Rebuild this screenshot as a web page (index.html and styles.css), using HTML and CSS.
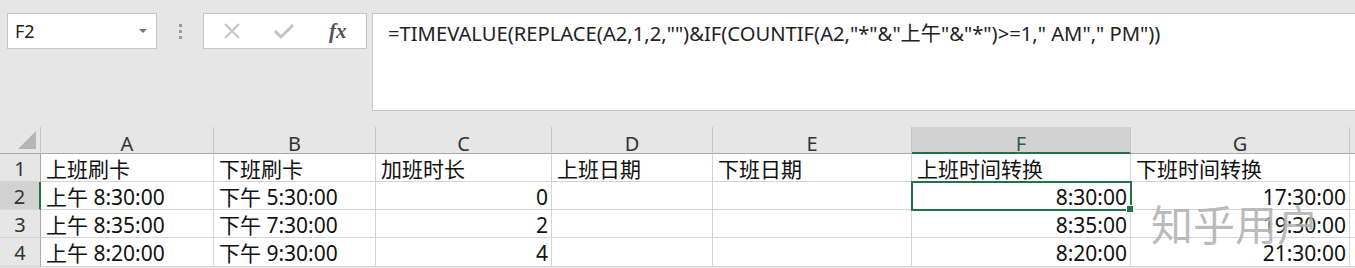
FILE: index.html
```html
<!DOCTYPE html>
<html lang="zh-CN">
<head>
  <meta charset="UTF-8" />
  <meta name="viewport" content="width=device-width, initial-scale=1.0"/>
  <title>TIMEVALUE 时间转换</title>
  <link rel="stylesheet" href="styles.css">
</head>
<body>

  <div class="toolbar">
    <div class="namebox">
      <span>F2</span>
      <span class="arrow"></span>
    </div>
    <div class="dots"><i></i><i></i><i></i></div>
    <div class="fxbox">
      <svg class="ico" width="20" height="20" viewBox="0 0 20 20">
        <path d="M3 3 L17 17 M17 3 L3 17" stroke="#c4c4c4" stroke-width="2" fill="none"/>
      </svg>
      <svg class="ico" width="22" height="20" viewBox="0 0 22 20">
        <path d="M2 10 L8 16 L20 4" stroke="#c4c4c4" stroke-width="3" fill="none"/>
      </svg>
      <span class="fx">fx</span>
    </div>
    <div class="formula">=TIMEVALUE(REPLACE(A2,1,2,"")&amp;IF(COUNTIF(A2,"*"&amp;"上午"&amp;"*")&gt;=1," AM"," PM"))</div>
  </div>

  <div class="sheet">
    <div class="corner"><span class="tri"></span></div>
    <div class="colhead">A</div>
    <div class="colhead">B</div>
    <div class="colhead">C</div>
    <div class="colhead">D</div>
    <div class="colhead">E</div>
    <div class="colhead sel">F</div>
    <div class="colhead">G</div>
    <div class="colhead rest"></div>

    <div class="rowhead">1</div>
    <div class="cell">上班刷卡</div>
    <div class="cell">下班刷卡</div>
    <div class="cell">加班时长</div>
    <div class="cell">上班日期</div>
    <div class="cell">下班日期</div>
    <div class="cell">上班时间转换</div>
    <div class="cell">下班时间转换</div>
    <div class="cell rest"></div>

    <div class="rowhead sel">2</div>
    <div class="cell">上午 8:30:00</div>
    <div class="cell">下午 5:30:00</div>
    <div class="cell num">0</div>
    <div class="cell"></div>
    <div class="cell"></div>
    <div class="cell num active">8:30:00</div>
    <div class="cell num">17:30:00</div>
    <div class="cell rest"></div>

    <div class="rowhead">3</div>
    <div class="cell">上午 8:35:00</div>
    <div class="cell">下午 7:30:00</div>
    <div class="cell num">2</div>
    <div class="cell"></div>
    <div class="cell"></div>
    <div class="cell num">8:35:00</div>
    <div class="cell num">19:30:00</div>
    <div class="cell rest"></div>

    <div class="rowhead">4</div>
    <div class="cell">上午 8:20:00</div>
    <div class="cell">下午 9:30:00</div>
    <div class="cell num">4</div>
    <div class="cell"></div>
    <div class="cell"></div>
    <div class="cell num">8:20:00</div>
    <div class="cell num">21:30:00</div>
    <div class="cell rest"></div>

    <div class="watermark">知乎用户</div>
  </div>

</body>
</html>
```

FILE: styles.css
```css
body {
  margin: 0;
  background: #e6e6e6;
  font-family: "Noto Sans", "Noto Sans CJK SC", sans-serif;
  color: #222;
  overflow: hidden;
}

.toolbar {
  display: flex;
  align-items: flex-start;
  padding-top: 13px;
  height: 98px;
}

.namebox {
  margin-left: 7px;
  width: 150px;
  height: 36px;
  box-sizing: border-box;
  background: white;
  border: 1px solid #c6c6c6;
  display: flex;
  align-items: center;
  justify-content: space-between;
  padding: 0 9px 0 7px;
  font-size: 18px;
  color: #222;
}

.arrow {
  width: 0;
  height: 0;
  border-left: 4px solid transparent;
  border-right: 4px solid transparent;
  border-top: 4px solid #777;
}

.dots {
  width: 46px;
  height: 36px;
  display: flex;
  flex-direction: column;
  align-items: center;
  justify-content: center;
  gap: 3px;
}

.dots i {
  width: 3px;
  height: 3px;
  background: #999;
}

.fxbox {
  width: 164px;
  height: 36px;
  box-sizing: border-box;
  background: white;
  border: 1px solid #c6c6c6;
  display: flex;
  align-items: center;
  padding-left: 18px;
  gap: 31px;
}

.fx {
  font-family: "Liberation Serif", serif;
  font-style: italic;
  font-weight: bold;
  font-size: 21px;
  color: #555;
  margin-left: 3px;
}

.formula {
  margin-left: 5px;
  flex: 1;
  height: 98px;
  box-sizing: border-box;
  background: white;
  border: 1px solid #c6c6c6;
  border-right: none;
  padding: 4px 0 0 15px;
  font-size: 20.2px;
  color: #222;
}

.sheet {
  position: relative;
  margin-top: 16px;
  display: grid;
  grid-template-columns: 41px 173px 162px 176px 161px 199px 219px 219px 1fr;
  grid-template-rows: 27px 28px 28px 28px 29px;
}

.corner {
  border-bottom: 1px solid #a8a8a8;
  border-right: 1px solid #c8c8c8;
  position: relative;
}

.tri {
  position: absolute;
  right: 4px;
  bottom: 4px;
  width: 0;
  height: 0;
  border-left: 18px solid transparent;
  border-bottom: 18px solid #b5b5b5;
}

.colhead {
  text-align: center;
  font-size: 20px;
  line-height: 27px;
  padding-top: 3px;
  color: #333;
  border-bottom: 1px solid #a8a8a8;
  border-right: 1px solid #c8c8c8;
  box-sizing: border-box;
}

.colhead.sel {
  background: #d2d2d2;
  color: #2c5e44;
  border-bottom: 2px solid #217346;
}

.colhead.rest {
  border-right: none;
}

.rowhead {
  text-align: center;
  font-size: 20px;
  line-height: 28px;
  padding-top: 1px;
  color: #333;
  border-right: 1px solid #a8a8a8;
  border-bottom: 1px solid #d4d4d4;
  box-sizing: border-box;
}

.rowhead.sel {
  background: #d2d2d2;
  border-right: 2px solid #217346;
}

.cell {
  background: white;
  border-right: 1px solid #d4d4d4;
  border-bottom: 1px solid #d4d4d4;
  box-sizing: border-box;
  font-size: 21px;
  line-height: 28px;
  padding: 1px 5px 0 5px;
  white-space: nowrap;
  color: #111;
}

.cell.num {
  text-align: right;
  padding-right: 3px;
}

.cell.rest {
  border-right: none;
}

.cell.active {
  position: relative;
  outline: 2px solid #217346;
  outline-offset: -1px;
  z-index: 1;
}

.cell.active::after {
  content: "";
  position: absolute;
  right: -4px;
  bottom: -4px;
  width: 6px;
  height: 6px;
  background: #217346;
  border: 1px solid white;
}

.watermark {
  position: absolute;
  left: 1151px;
  top: 65px;
  font-family: "Noto Sans CJK SC", sans-serif;
  font-size: 42px;
  letter-spacing: 0px;
  color: rgba(120, 120, 120, 0.5);
  text-shadow: 0 0 2px rgba(255, 255, 255, 0.9);
  z-index: 2;
  pointer-events: none;
}
```
